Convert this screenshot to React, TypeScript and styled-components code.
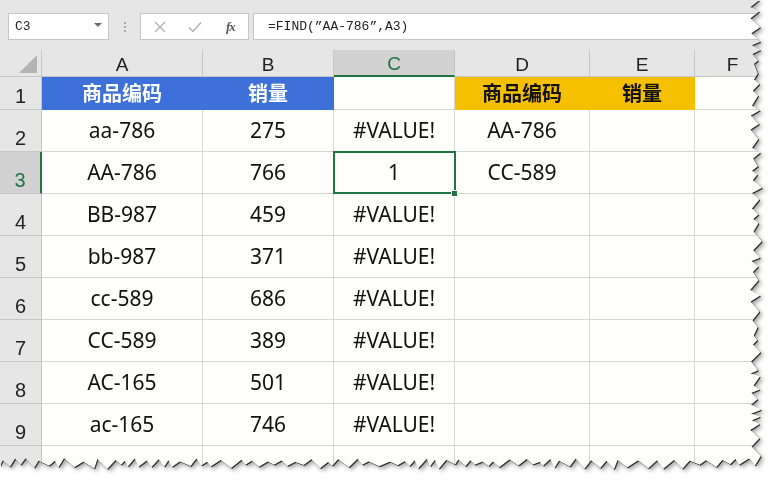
import React from 'react';
import styled, {createGlobalStyle} from 'styled-components';

const GlobalStyle = createGlobalStyle`
  html, body {
    margin: 0;
    padding: 0;
    background: #ffffff;
  }
`

const GREEN = '#217346';

const Page = styled.div`
  width: 771px;
  height: 481px;
  overflow: hidden;
  background: #ffffff;
`

const Paper = styled.div`
  width: 771px;
  height: 481px;
  filter: drop-shadow(1px 1px 0 rgba(40, 40, 40, 0.9)) drop-shadow(2px 2px 2px rgba(0, 0, 0, 0.35));
`

const Sheet = styled.div`
  width: 771px;
  height: 481px;
  background: #e6e6e6;
  display: flex;
  flex-direction: column;
  font-family: "Noto Sans", "Noto Sans CJK SC", sans-serif;
`

const Toolbar = styled.div`
  flex-shrink: 0;
  height: 27px;
  margin: 13px 0 10px 8px;
  display: flex;
  align-items: stretch;
`

const NameBox = styled.div`
  width: 101px;
  box-sizing: border-box;
  border: 1px solid #c6c6c6;
  background: #ffffff;
  display: flex;
  align-items: center;
  justify-content: space-between;
  padding: 0 6px 0 6px;
  font-family: "Liberation Mono", monospace;
  font-size: 13px;
  color: #222;
`

const Arrow = styled.span`
  width: 0;
  height: 0;
  border-left: 4px solid transparent;
  border-right: 4px solid transparent;
  border-top: 4px solid #6b6b6b;
  margin-top: -3px;
`

const Grip = styled.div`
  width: 31px;
  display: flex;
  flex-direction: column;
  align-items: center;
  justify-content: center;
  gap: 2px;
  span {
    width: 2px;
    height: 2px;
    background: #a8a8a8;
  }
`

const FxBox = styled.div`
  width: 109px;
  box-sizing: border-box;
  border: 1px solid #c6c6c6;
  background: #ffffff;
  display: flex;
  align-items: center;
  padding: 0 0 0 13px;
  gap: 22px;
`

const Fx = styled.span`
  font-family: "Liberation Serif", serif;
  font-style: italic;
  font-weight: bold;
  font-size: 13px;
  color: #555;
  margin-left: 2px;
  letter-spacing: -1px;
`

const FormulaBox = styled.div`
  flex: 1;
  margin-left: 4px;
  box-sizing: border-box;
  border: 1px solid #c6c6c6;
  border-right: none;
  background: #ffffff;
  display: flex;
  align-items: center;
  padding-left: 14px;
  font-family: "Liberation Mono", monospace;
  font-size: 13px;
  color: #222;
`

const Grid = styled.div`
  flex-shrink: 0;
  display: grid;
  grid-template-columns: 42px 161px 131px 121px 135px 105px 1fr;
  grid-template-rows: 27px 33px repeat(9, 42px);
  background: #fefefb;
`

const Corner = styled.div`
  background: #e6e6e6;
  border-right: 1px solid #c6c6c6;
  border-bottom: 1px solid #c6c6c6;
  display: flex;
  align-items: flex-end;
  justify-content: flex-end;
  padding: 0 4px 3px 0;
  span {
    width: 0;
    height: 0;
    border-left: 18px solid transparent;
    border-bottom: 18px solid #b4b4b4;
  }
`

const ColHead = styled.div<{ $active?: boolean }>`
  background: ${p => p.$active ? '#d2d2d2' : '#e6e6e6'};
  border-right: 1px solid #c6c6c6;
  border-bottom: ${p => p.$active ? `2px solid ${GREEN}` : '1px solid #c6c6c6'};
  display: flex;
  align-items: center;
  justify-content: center;
  font-family: "Liberation Sans", sans-serif;
  font-size: 19px;
  color: ${p => p.$active ? GREEN : '#222'};
  padding-top: 3px;
  box-sizing: border-box;
`

const RowHead = styled.div<{ $active?: boolean }>`
  background: ${p => p.$active ? '#d2d2d2' : '#e6e6e6'};
  border-right: ${p => p.$active ? `2px solid ${GREEN}` : '1px solid #c6c6c6'};
  border-bottom: 1px solid #c6c6c6;
  display: flex;
  align-items: flex-end;
  justify-content: center;
  padding-bottom: 1px;
  box-sizing: border-box;
  font-family: "Liberation Sans", sans-serif;
  font-size: 20px;
  color: ${p => p.$active ? GREEN : '#222'};
`

const Cell = styled.div<{ $fill?: 'blue' | 'yellow'; $selected?: boolean }>`
  position: relative;
  background: ${p => p.$fill === 'blue' ? '#3d70d9' : p.$fill === 'yellow' ? '#f5c000' : 'transparent'};
  border-right: 1px solid ${p => p.$fill ? 'transparent' : '#d6d6d6'};
  border-bottom: 1px solid ${p => p.$fill ? 'transparent' : '#d6d6d6'};
  display: flex;
  align-items: center;
  justify-content: center;
  font-size: ${p => p.$fill ? 20 : 21}px;
  font-weight: ${p => p.$fill ? 700 : 400};
  color: ${p => p.$fill === 'blue' ? '#ffffff' : '#111'};
  padding-bottom: 2px;
  box-sizing: border-box;
  white-space: nowrap;

  ${p => p.$selected && `
    &::after {
      content: '';
      position: absolute;
      left: -1px;
      top: -1px;
      right: -2px;
      bottom: -1px;
      border: 2px solid ${GREEN};
    }
    &::before {
      content: '';
      position: absolute;
      right: -4px;
      bottom: -4px;
      width: 5px;
      height: 5px;
      background: ${GREEN};
      border: 1px solid #ffffff;
      z-index: 2;
    }
  `}
`

const cols = ['A', 'B', 'C', 'D', 'E', 'F'];

const data: string[][] = [
    ['商品编码', '销量', '', '商品编码', '销量', ''],
    ['aa-786', '275', '#VALUE!', 'AA-786', '', ''],
    ['AA-786', '766', '1', 'CC-589', '', ''],
    ['BB-987', '459', '#VALUE!', '', '', ''],
    ['bb-987', '371', '#VALUE!', '', '', ''],
    ['cc-589', '686', '#VALUE!', '', '', ''],
    ['CC-589', '389', '#VALUE!', '', '', ''],
    ['AC-165', '501', '#VALUE!', '', '', ''],
    ['ac-165', '746', '#VALUE!', '', '', ''],
    ['', '', '', '', '', ''],
];

// jagged torn-paper outline along the right and bottom edges
const tornEdge = () => {
    let seed = 7;
    const rnd = () => {
        seed = (seed * 9301 + 49297) % 233280;
        return seed / 233280;
    };
    const pts: string[] = ['0px 0px'];
    let y = 0;
    let flip = false;
    while (y < 462) {
        const x = flip ? 750 + rnd() * 4 : 757 + rnd() * 5;
        pts.push(`${x.toFixed(1)}px ${y.toFixed(1)}px`);
        y += 3 + rnd() * 7;
        flip = !flip;
    }
    let x = 755;
    flip = false;
    while (x > 0) {
        const yy = flip ? 458 + rnd() * 4 : 464 + rnd() * 5;
        pts.push(`${x.toFixed(1)}px ${yy.toFixed(1)}px`);
        x -= 3 + rnd() * 8;
        flip = !flip;
    }
    pts.push('0px 466px');
    return `polygon(${pts.join(', ')})`;
};

const clip = tornEdge();

const Cross = () => (
    <svg width="12" height="12" viewBox="0 0 12 12">
        <path d="M1 1L11 11M11 1L1 11" stroke="#b0b0b0" strokeWidth="1.3" fill="none"/>
    </svg>
);

const Check = () => (
    <svg width="14" height="12" viewBox="0 0 14 12">
        <path d="M1 6.5L5 10.5L13 1.5" stroke="#b0b0b0" strokeWidth="1.5" fill="none"/>
    </svg>
);

export default function App() {
    return (
        <Page>
            <GlobalStyle/>
            <Paper>
                <Sheet style={{clipPath: clip}}>
                    <Toolbar>
                        <NameBox>C3<Arrow/></NameBox>
                        <Grip><span/><span/><span/></Grip>
                        <FxBox><Cross/><Check/><Fx>fx</Fx></FxBox>
                        <FormulaBox>=FIND(”AA-786”,A3)</FormulaBox>
                    </Toolbar>
                    <Grid>
                        <Corner><span/></Corner>
                        {cols.map(c => <ColHead key={c} $active={c === 'C'}>{c}</ColHead>)}
                        {data.map((row, r) => (
                            <React.Fragment key={r}>
                                <RowHead $active={r === 2}>{r + 1}</RowHead>
                                {row.map((v, c) => {
                                    const fill = r === 0 ? (c < 2 ? 'blue' : c === 3 || c === 4 ? 'yellow' : undefined) : undefined;
                                    return (
                                        <Cell key={c} $fill={fill} $selected={r === 2 && c === 2}>{v}</Cell>
                                    );
                                })}
                            </React.Fragment>
                        ))}
                    </Grid>
                </Sheet>
            </Paper>
        </Page>
    );
}
